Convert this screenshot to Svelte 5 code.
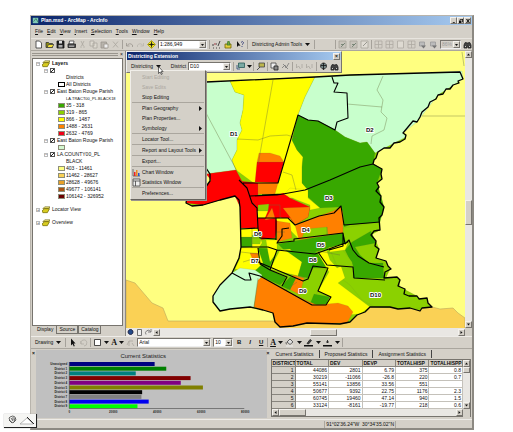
<script>
  const menus = ['File', 'Edit', 'View', 'Insert', 'Selection', 'Tools', 'Window', 'Help'];

  // Each icon is a list of [path, fill, stroke] on a 9 x 9 grid.
  const icons = {
    app: [['M1 1h7v7h-7z', '#7fc8b8', 'none'], ['M2 6L5 2L8 7', 'none', '#1d5c3c']],
    new: [['M2 1h3.5l2 2v5h-5.5z', '#fff', '#333']],
    open: [['M1 7.5v-5h2.5l1 1h3v4z', '#8a8a10', '#333'], ['M2 7.5l1.5-3h5.5l-2 3z', '#f3e03a', '#444']],
    save: [['M1 1h7v7h-7z', '#222', '#111'], ['M3 1h3v2.5h-3z', '#ddd', 'none'], ['M2.5 5h4v2.5h-4z', '#aaa', 'none']],
    print: [['M2.5 1h4.5l-.5 3h-4.5z', '#fff', '#444'], ['M1 4h7.5v3.5h-7.5z', '#555', '#222'], ['M2 6.2h5', 'none', '#ddd']],
    cut: [['M3 1l2.5 5M6 1l-2.5 5M3 6.2v1.6M6 6.2v1.6', 'none', '#aaa69e']],
    copy: [['M1 1h4v5h-4zM4 3h4v5h-4z', '#ddd9d0', '#aaa69e']],
    paste: [['M1 2h5.5v6h-5.5z', '#b8b4ac', '#99958d'], ['M4 4h4v4h-4z', '#eee', '#99958d']],
    del: [['M2 1.5l5 6M7 1.5l-5 6', 'none', '#aaa69e']],
    undo: [['M1.5 3v3h3M1.5 6q3-4 6-1v2', 'none', '#9a968e']],
    redo: [['M7.5 3v3h-3M7.5 6q-3-4-6-1v2', 'none', '#bab6ae']],
    plus: [['M4.5 .5l4 4l-4 4l-4-4z', '#f4ea28', '#b0a400'], ['M4.500 1.500v6M1.500 4.500h6', 'none', '#111'], ['M3.500 3.500h2v2h-2z', '#111', 'none']],
    editor: [['M1 8h1M4 8h1M7 8h1M1 6v-2M4 5v-2M6 6l2-5', 'none', '#222'], ['M2 3h2v2h-2z', '#b88', 'none']],
    toolbox: [['M1 4h6v4h-6z', '#e3cf3c', '#756500'], ['M4 1l-1 4h3l-1-4', '#7a3', '#373']],
    help: [['M1 1v6l1.500-1.500l2 .2z', '#111', 'none'], ['M5 2.500q1.500-2 2.500 0q0 1.200-1.500 2.200M6 6v1', 'none', '#222c70']],
    zin: [['M1 1h7v7h-7z', '#c7c3bb', '#a7a39b'], ['M3 7l4-4M3 4.500h3', 'none', '#6a7a6a']],
    zout: [['M1 1h7v7h-7z', '#e0dcd4', '#a7a39b'], ['M3 6l4-4', 'none', '#85857d']],
    grid: [['M1 1h7v7h-7zM1 4.500h7M4.500 1v7', 'none', '#aeaaa2']],
    frame: [['M1.500 1h6v7h-6z', '#dedad2', '#aeaaa2']],
    stack: [['M1.500 2h5v4h-5z', '#bbb', '#999'], ['M3 5.500h5l-2.500 3z', '#777', 'none']],
    find: [['M1 5q1-4 3-2h1q2-2 3 2v3h-3v-2h-1v2h-3z', '#444', '#222'], ['M2 6.500h1M6 6.500h1', 'none', '#eee']],
    assign: [['M2.500 1h6v4.500h-6z', '#7aa9a3', '#285a58'], ['M1 3v4h3', 'none', '#234a7a']],
    target: [['M3 1h5.500v4h-5.500z', '#bdb64c', '#444'], ['M1 8l3-3', 'none', '#333']],
    zoom: [['M1 1h5v5h-5z', '#eee', '#444'], ['M4 4h4v4h-4z', '#888', '#222']],
    net: [['M1 6l3-3l1 3l3-5M2 2l5 5', 'none', '#777']],
    swap: [['M1.500 2v4l2-2l2 3M7 2v4', 'none', '#aaa69e']],
    globe: [['M4.500 1a3 3 0 1 0 .1 0z', '#788', '#222'], ['M4.500 1v7M2 3.500h5', 'none', '#111']],
    pointer: [['M3 .5v7l1.600-1.500l1.200 2.500l1-.500l-1.200-2.400h2z', '#111', 'none']],
    rotate: [['M2 6a3 3 0 1 1 3 2M2 6v-3M2 6h3', 'none', '#b0aca4']],
    rect: [['M1.500 1.500h6v6h-6z', '#fff', '#222']],
    node: [['M1 7l2-4h4M3 3v5M6 5l2 3', 'none', '#aaa69e']],
    fill: [['M2 4l3-3l3 3l-3 2.500z', '#ddd', '#444'], ['M1 4q0 3 1 2', 'none', '#555'], ['M1 7.500h7v1h-7z', '#eee', 'none']],
    line: [['M3 5.500l3-4l1.500 1l-3 3.500z', '#444', '#222'], ['M0 7h9v1.500h-9z', '#111', 'none']],
    marker: [['M4.500 2v3M3 4h3', 'none', '#111'], ['M0 7h9v1.500h-9z', '#111', 'none']],
    layer: [['M1 3l2-2h6l-2 2z', '#fbf28a', '#6b6300'], ['M0 5.500l3-2.500h5.500l-2.500 4.500h-5z', '#d8cc20', '#6b6300']],
    chart: [['M1 1v7h7', 'none', '#555'], ['M2 4h1.500v4h-1.500z', '#e22', 'none'], ['M4 2h1.500v6h-1.500z', '#ec8a20', 'none'], ['M6 5h1.500v3h-1.500z', '#25c', 'none']],
    table: [['M1 1h7v7h-7zM1 3h7M3.500 3v5', '#eee', '#444']],
    world: [['M4.500 1.500a2.500 2.500 0 1 0 .1 0z', '#234a88', '#113']],
    page: [['M2.500 1.500h4v6h-4z', '#eee', '#555']],
    refresh: [['M2 6.500a2.500 2.500 0 1 1 4.500-3M7 1v3h-3', 'none', '#666']]
  };

  const toc = [
    { k: 'group', t: 'Layers', b: true },
    { k: 'check', t: '' },
    { k: 'head', t: 'Districts' },
    { k: 'sw', t: 'All Districts', c: '#fff', o: true },
    { k: 'check', t: 'East Baton Rouge Parish' },
    { k: 'head', t: 'LA.TRACT00_PL.BLACK18', long: true },
    { k: 'sw', t: '35 - 318', c: '#38a800' },
    { k: 'sw', t: '319 - 865', c: '#8bd100' },
    { k: 'sw', t: '866 - 1487', c: '#ffff00' },
    { k: 'sw', t: '1488 - 2631', c: '#ff8000' },
    { k: 'sw', t: '2632 - 4769', c: '#f00018' },
    { k: 'check', t: 'East Baton Rouge Parish' },
    { k: 'sw', t: '', c: '#d3f7d0' },
    { k: 'check', t: 'LA.COUNTY00_PL' },
    { k: 'head', t: 'BLACK' },
    { k: 'sw', t: '403 - 11461', c: '#ffff80' },
    { k: 'sw', t: '11462 - 28627', c: '#fad155' },
    { k: 'sw', t: '28628 - 49676', c: '#e8a028' },
    { k: 'sw', t: '49677 - 106141', c: '#ad5313' },
    { k: 'sw', t: '106142 - 326952', c: '#6b0000' },
    { k: 'group', t: 'Locator View', gap: true },
    { k: 'group', t: 'Overview', gap: true }
  ];

  const commands = [
    { t: 'Start Editing', off: true }, { t: 'Save Edits', off: true }, { t: 'Stop Editing' }, null,
    { t: 'Plan Geography', sub: true }, { t: 'Plan Properties...' }, { t: 'Symbology', sub: true }, null,
    { t: 'Locator Tool...' }, null,
    { t: 'Report and Layout Tools', sub: true }, null,
    { t: 'Export...' }, null,
    { t: 'Chart Window', i: 'chart' }, { t: 'Statistics Window', i: 'table' }, null,
    { t: 'Preferences...' }
  ];

  const outline = 'M206 82L315 77L350 75L460 72L463 79L458 81L459 83L453 85L450 89L446 89L443 94L438 95L436 99L430 102L428 107L422 112L420 117L417 122L413 121L403 133L406 135L405 139L400 142L394 143L390 148L384 148L378 152L376 158L374 160L373 164L382 169L381 174L382 179L377 183L379 187L376 191L381 196L380 202L384 207L382 215L379 218L380 230L374 231L371 235L376 241L375 246L379 249L376 258L386 261L388 266L391 269L385 272L384 278L397 277L400 280L398 286L405 289L404 294L409 296L417 296L419 299L427 298L428 303L432 307L422 308L420 311L410 308L398 309L390 307L378 307L370 307L365 312L357 315L350 322L340 324L307 323L293 326L280 327L275 322L273 313L263 310L250 307L230 309L220 311L213 302L213 296L220 285L232 273L239 258L241 247L240 207L239 200L235 196L220 200L203 205L192 206L186 203L187 197L205 188L210 181L210 174L206 168Z';

  const areas = [
    ['#c8ffcc', 'M200 82L230 81L235 92L244 95L243 110L240 123L242 130L237 140L237 150L232 160L236 170L206 174Z'],
    ['#ffff00', 'M230 81L315 77L305 97L298 115L292 140L297 150L303 157L302 167L302 183L308 190L308 198L280 198L255 184L236 170L232 160L237 150L237 140L242 130L240 123L243 110L244 95L235 92Z'],
    ['#c8ffcc', 'M315 77L462 71L463 79L438 95L417 122L403 133L406 137L375 153L367 142L360 143L345 137L335 130L318 121L308 120L298 115L305 97Z'],
    ['#38a800', 'M298 115L308 120L318 121L335 130L345 137L360 143L367 142L375 153L373 164L382 169L377 183L381 196L384 207L380 222L350 225L344 227L343 213L340 207L320 208L308 197L308 190L302 183L302 167L303 157L297 150L292 140Z'],
    ['#ff0000', 'M206 174L236 170L243 183L252 195L257 208L258 228L241 228L240 207L235 196L203 205L186 203L187 197L205 188L211 180Z'],
    ['#ff0000', 'M257 162L284 162L278 183L255 182Z'],
    ['#ff8000', 'M259 153L270 153L280 156L284 162L257 162Z'],
    ['#ff0000', 'M240 181L258 183L258 195L277 195L283 193L290 198L310 207L308 217L295 225L280 217L275 238L258 240L257 208Z'],
    ['#ff8000', 'M258 183L278 183L275 194L258 194Z'],
    ['#ffff00', 'M290 188L308 190L308 198L320 208L310 210L310 205L297 200L284 194Z'],
    ['#8bd100', 'M258 205L269 204L268 211L258 211Z'],
    ['#ffff00', 'M257 211L268 211L265 218L258 218Z'],
    ['#ff8000', 'M272 208L275 218L265 220Z'],
    ['#ff8000', 'M283 208L310 207L308 217L295 225L290 217Z'],
    ['#ffff00', 'M275 218L290 218L295 225L303 236L298 238L288 228L277 221Z'],
    ['#ff8000', 'M277 221L290 223L292 238L277 242Z'],
    ['#ff8000', 'M295 225L319 216L333 211L341 207L343 213L343 233L299 240Z'],
    ['#8bd100', 'M305 229L327 227L328 235L302 238Z'],
    ['#ffff00', 'M241 229L258 228L262 243L258 249L241 247Z'],
    ['#38a800', 'M241 237L252 237L252 247L241 247Z'],
    ['#8bd100', 'M252 235L262 234L260 244L252 244Z'],
    ['#8bd100', 'M343 228L380 222L380 230L371 235L376 241L379 249L376 258L390 269L385 280L398 277L400 287L417 296L432 307L410 309L375 307L362 300L350 285L330 270L343 250Z'],
    ['#38a800', 'M345 250L352 242L371 231L376 243L355 247L360 255L369 263L383 263L384 278L353 278L353 266Z'],
    ['#38a800', 'M278 244L294 241L343 233L346 243L315 252L285 251Z'],
    ['#ffff00', 'M241 248L258 248L262 256L265 266L255 270L247 272L235 269L240 258Z'],
    ['#ff8000', 'M250 253L258 253L258 258L252 258Z'],
    ['#38a800', 'M258 248L277 249L269 269L286 277L282 286L260 276L255 271L263 263Z'],
    ['#ffff00', 'M266 240L277 240L277 252L270 262L268 252Z'],
    ['#ffff00', 'M280 250L290 249L302 262L298 276L270 269Z'],
    ['#38a800', 'M285 250L315 252L330 260L325 268L313 268L308 278L298 276L302 262Z'],
    ['#8bd100', 'M270 270L298 276L308 279L313 268L328 270L318 291L310 305L287 295L280 285L287 278Z'],
    ['#ff8000', 'M293 275L304 278L300 295L289 289Z'],
    ['#38a800', 'M290 277L281 286L290 290L296 278ZM314 294L330 297L326 305L310 304Z'],
    ['#ffff00', 'M317 252L327 251L330 260L337 268L341 266L345 278L338 283L370 307L360 314L345 315L326 305L330 297L318 291L329 272Z'],
    ['#8bd100', 'M331 252L343 250L352 262L353 267L337 266Z'],
    ['#ffff00', 'M328 248L348 243L345 250L330 252Z'],
    ['#c8ffcc', 'M232 273L240 268L255 270L262 275L258 283L254 307L230 309L220 311L213 302L213 296L220 285Z'],
    ['#ff8000', 'M258 280L262 277L286 290L303 299L317 305L338 303L348 306L353 312L347 323L307 323L293 326L280 327L275 322L273 313L254 307Z']
  ];

  const districts =
    'M332 77L334 83L338 83L334 92L347 93L348 118L337 122L335 130L318 121L308 120L298 115L278 183L243 183M262 195L283 194L305 190L330 180L360 167L373 164' +
    'M239 180L247 188L252 203L257 208L258 228L241 229M250 196L277 195L283 194M258 218L288 218L295 225L319 216L334 213L341 206L344 225L380 222M276 218L276 240M258 228L260 238L276 239M289 228L282 229L282 236L277 243L294 241L294 239L343 233L345 244L349 240L353 250L358 256L369 263L384 267M241 247L268 247L277 250L270 270L287 277L282 286' +
    'M277 250L315 254L348 242M270 270L260 264L258 248M258 262L303 281L308 279L313 266L328 268L318 291L331 297L326 305L312 305L303 300L260 276L249 273L251 280L245 280L232 273M318 252L327 265L353 267L354 278L385 280M343 233L343 246L329 250';

  const tractLines =
    'M206 113L237 171M273 80L258 165M237 139L258 140L270 136L287 135L297 138M383 76L377 90L383 100L381 112L387 118L384 130L372 136L371 144M347 104L382 107M422 116H465M462 52L464 66M283 172L292 175L296 190M242 238H262M241 252L258 254M243 262L256 258M327 227V235M276 232H285M298 276L305 278M258 278L254 307M286 290L297 282M318 251L340 255M268 205H280V218M252 229V248';

  const labels = [
    ['D1', 230, 136], ['D2', 366, 132], ['D3', 325, 200], ['D4', 302, 232], ['D5', 317, 247], ['D6', 254, 236],
    ['D7', 251, 263], ['D8', 309, 262], ['D9', 299, 293], ['D10', 370, 297]
  ];

  const bars = [
    ['Unassigned', 38800, '#000080'], ['District 1', 44086, '#008000'], ['District 2', 30219, '#008080'],
    ['District 3', 55141, '#800000'], ['District 4', 50677, '#800080'], ['District 5', 60745, '#808000'],
    ['District 6', 33124, '#000000'], ['District 7', 32800, '#808080'], ['District 8', 36100, '#0000f0'],
    ['District 9', 31000, '#00ff00']
  ];

  const columns = ['DISTRICT', 'TOTAL', 'DEV', 'DEVP', 'TOTALHISP', 'TOTALHISPP'];
  const rows = [
    ['1', '44086', '2801', '6.79', '375', '0.8'],
    ['2', '30219', '-11066', '-26.8', '220', '0.7'],
    ['3', '55141', '13856', '33.56', '551', ''],
    ['4', '50677', '9392', '22.75', '1176', '2.3'],
    ['5', '60745', '19460', '47.14', '940', '1.5'],
    ['6', '33124', '-8161', '-19.77', '218', '0.6']
  ];
</script>

{#snippet icon(name)}
  <svg class="icon" viewBox="0 0 9 9" aria-hidden="true">
    {#each icons[name] as [d, fill, stroke]}
      <path {d} {fill} {stroke} stroke-width=".8" />
    {/each}
  </svg>
{/snippet}

{#snippet tools(names)}
  {#each names as name}
    <button class="tool" aria-label={name}>{@render icon(name)}</button>
  {/each}
{/snippet}

{#snippet arrow(d)}
  <svg class="arrow" viewBox="0 0 5 5" aria-hidden="true"><path {d} /></svg>
{/snippet}

{#snippet combo(name, value, cls)}
  <span class="combo {cls}">
    <select aria-label={name}><option>{value}</option></select>
    <span class="raised">{@render arrow('M1 2h3l-1.500 2z')}</span>
  </span>
{/snippet}

<main>
  <div class="window">
    <header class="title">
      {@render icon('app')}
      <span>Plan.mxd - ArcMap - ArcInfo</span>
      <div class="caption">
        <button class="raised" aria-label="Minimize">{@render arrow('M1 4h2.500v1h-2.500z')}</button>
        <button class="raised" aria-label="Restore">{@render arrow('M1 0h4v4h-1v-3h-3zM0 2h3v3h-3z')}</button>
        <button class="raised" aria-label="Close">{@render arrow('M0 0h1.500l1 1.500l1-1.500h1.500l-1.700 2.500l1.700 2.500h-1.500l-1-1.500l-1 1.500h-1.500l1.700-2.500z')}</button>
      </div>
    </header>

    <nav class="menubar">
      {#each menus as m}
        <button><u>{m[0]}</u>{m.slice(1)}</button>
      {/each}
    </nav>

    <div class="toolbar main-tools">
      {@render tools(['new', 'open', 'save', 'print', 'cut', 'copy', 'paste', 'del'])}
      <i class="sep"></i>
      {@render tools(['undo', 'redo', 'plus'])}
      {@render combo('Scale', '1:286,949', 'scale')}
      <i class="sep"></i>
      <div class="spread">{@render tools(['editor', 'toolbox', 'help'])}</div>
      <i class="sep"></i>
      <button class="text">Districting Admin Tools {@render arrow('M0 1h5l-2.500 3z')}</button>
      <i class="sep"></i>
      <div class="right-tools">
        <i class="sep"></i>
        {@render tools(['zin', 'zin', 'zout'])}
        <i class="sep"></i>
        {@render tools(['grid', 'grid', 'frame', 'grid', 'stack', 'stack'])}
        {@render combo('Zoom', '86%', 'zoom')}
        {@render tools(['find'])}
      </div>
    </div>

    <div class="body">
      <aside>
        <div class="grip"><i></i><button aria-label="Close contents">×</button></div>
        <div class="toc">
          {#each toc as r}
            <div class="row {r.k}" class:gap={r.gap} class:long={r.long}>
              {#if r.k === 'group'}
                <span class="exp">{r.b ? '−' : '+'}</span>{@render icon('layer')}
              {:else if r.k === 'check'}
                <span class="exp">−</span>
              {:else if r.k === 'sw'}
                <span class="swatch" class:heavy={r.o} style="background:{r.c}"></span>
              {/if}
              {#if r.k === 'check'}
                <label><input type="checkbox" checked aria-label={r.t || 'Districts'} />{r.t}</label>
              {:else}
                <span class:bold={r.b}>{r.t}</span>
              {/if}
            </div>
          {/each}
        </div>
        <div class="toctabs"><button class="on">Display</button><button>Source</button><button>Catalog</button></div>
      </aside>

      <section class="mapframe">
        <div class="mapmid">
          <svg class="map" viewBox="126 51 339 277" preserveAspectRatio="xMidYMid slice" role="img" aria-label="District map">
            <rect x="0" y="0" width="700" height="500" fill="#ffff80" />
            <path d="M126 280L135 283L152 303L163 308L168 321H275L307 323L347 323L357 315L370 307L410 308L432 307L440 309L453 308L458 313L465 318V340H126Z" fill="#fad155" stroke="#bba65a" stroke-width=".6" />
            <path d={outline} fill="#8bd100" />
            {#each areas as [fill, d]}
              <path {d} {fill} stroke="#6a7a30" stroke-opacity=".35" stroke-width=".4" />
            {/each}
            <path d={tractLines} fill="none" stroke="#66703c" stroke-opacity=".65" stroke-width=".6" />
            <path d={districts} fill="none" stroke="#000" stroke-width="1.1" stroke-linejoin="round" />
            <path d={outline} fill="none" stroke="#000" stroke-width="1.3" stroke-linejoin="round" />
            {#each labels as [t, x, y]}
              <text {x} {y} class="maplabel">{t}</text>
            {/each}
          </svg>
          <div class="vscroll">
            <span class="raised">{@render arrow('M1 3.500h3l-1.500-2z')}</span>
            <span class="raised thumb"></span>
            <span class="raised">{@render arrow('M1 1.500h3l-1.500 2z')}</span>
          </div>
        </div>
        <div class="hscroll">
          {@render tools(['world', 'page', 'refresh'])}
          <span class="raised">{@render arrow('M3.500 1v3l-2-1.500z')}</span>
          <span class="raised thumb"></span>
          <span class="raised">{@render arrow('M1.500 1v3l2-1.500z')}</span>
          <i class="corner"></i>
        </div>

        <div class="float">
          <div class="floattitle"><span>Districting Extension</span><button class="raised" aria-label="Close toolbar">×</button></div>
          <div class="toolbar">
            <button class="text">Districting {@render arrow('M0 1h5l-2.500 3z')}</button>
            <span class="lab">District</span>
            {@render combo('District', 'D10', 'district')}
            <i class="sep"></i>
            {@render tools(['assign'])}{@render arrow('M0 1h5l-2.500 3z')}
            <i class="sep"></i>
            {@render tools(['target'])}
            <i class="sep"></i>
            {@render tools(['zoom', 'net'])}
            <i class="sep"></i>
            {@render tools(['swap', 'swap'])}
            <i class="sep"></i>
            {@render tools(['globe', 'find'])}
          </div>
        </div>

        <div class="menu">
          {#each commands as c}
            {#if c}
              <button disabled={c.off}>
                <span class="slot">{#if c.i}{@render icon(c.i)}{/if}</span>
                <span class="name">{c.t}</span>
                {#if c.sub}{@render arrow('M1 0v5l3-2.500z')}{/if}
              </button>
            {:else}
              <hr />
            {/if}
          {/each}
        </div>
        <svg class="cursor" viewBox="0 0 6 9" aria-hidden="true"><path d="M.5 .5v7l1.600-1.500l1.200 2.500l1-.500l-1.200-2.400h2z" fill="#fff" stroke="#111" stroke-width=".6" /></svg>
      </section>
    </div>

    <div class="toolbar drawing">
      <button class="text">Drawing {@render arrow('M0 1h5l-2.500 3z')}</button>
      <i class="sep"></i>
      {@render tools(['pointer', 'rotate'])}
      <i class="sep"></i>
      {@render tools(['rect'])}{@render arrow('M0 1h5l-2.500 3z')}
      <button class="glyph">A</button>{@render arrow('M0 1h5l-2.500 3z')}
      {@render tools(['node'])}
      {@render combo('Font', 'Arial', 'font')}
      {@render combo('Size', '10', 'size')}
      <div class="spread"><button class="fmt">B</button><button class="fmt it">I</button><button class="fmt un">U</button></div>
      <i class="sep"></i>
      <button class="glyph un">A</button>{@render arrow('M0 1h5l-2.500 3z')}
      {#each ['fill', 'line', 'marker'] as n}
        <div class="spread">{@render tools([n])}{@render arrow('M0 1h5l-2.500 3z')}</div>
      {/each}
      <i class="sep"></i>
    </div>

    <div class="stats">
      <button class="x" aria-label="Close chart">×</button>
      <svg class="chart" viewBox="35 350 230 68" role="img" aria-label="Current Statistics">
        <text x="142" y="358" class="charttitle">Current Statistics</text>
        {#each bars as [name, value, color], i}
          <text x="66" y={365 + i * 4.7} class="tiny" text-anchor="end">{name}</text>
          <rect x="68" y={362 + i * 4.7} width={value * 0.0022} height="4" fill={color} />
        {/each}
        <path d="M68 362V408.500H243" fill="none" stroke="#444" stroke-width=".6" />
        {#each ['0', '20000', '40000', '60000', '80000'] as t, i}
          <text x={68 + i * 44} y="413" class="tiny" text-anchor="middle">{t}</text>
        {/each}
      </svg>
      <button class="x" aria-label="Close table">×</button>
      <div class="tablepane">
        <div class="tabs"><button>Current Statistics</button><button>Proposed Statistics</button><button>Assignment Statistics</button></div>
        <div class="gridbox">
          <div class="gridmid">
            <table>
              <thead><tr>{#each columns as c}<th>{c}</th>{/each}</tr></thead>
              <tbody>
                {#each rows as r}
                  <tr>{#each r as v, i}{#if i === 0}<th scope="row">{v}</th>{:else}<td>{v}</td>{/if}{/each}</tr>
                {/each}
              </tbody>
            </table>
            <div class="vscroll small">
              <span class="raised">{@render arrow('M1 3.500h3l-1.500-2z')}</span>
              <span class="raised thumb"></span>
              <span class="raised">{@render arrow('M1 1.500h3l-1.500 2z')}</span>
            </div>
          </div>
          <div class="hscroll small">
            <span class="raised">{@render arrow('M3.500 1v3l-2-1.500z')}</span>
            <span class="raised thumb"></span>
            <span class="raised">{@render arrow('M1.500 1v3l2-1.500z')}</span>
            <i class="corner"></i>
          </div>
        </div>
      </div>
    </div>

    <footer><span>91°02'36.24"W&nbsp; 30°34'35.02"N</span></footer>
  </div>

  <div class="mini">
    <svg viewBox="0 0 32 12" aria-hidden="true">
      <path d="M6 3q3-2 5 0l1 3l-3 3l-3-2l-1-3zM7 4l2 3M9 3v3M11 4l-1 4M5 6l3 3" fill="none" stroke="#444" stroke-width=".8" />
      <path d="M16 10L23 4L29 10Z" fill="#fff" stroke="#999" stroke-width=".7" />
      <path d="M23 3L30 10" stroke="#111" stroke-width=".9" />
    </svg>
  </div>
</main>

<style>
  :global(body) { background: #fff; }
  main {
    position: relative;
    padding: 15px 39px 5px 30px;
    font: 5px/7px "Liberation Sans", Arial, sans-serif;
    color: #111;
  }
  main * { box-sizing: border-box; }
  button {
    display: flex; align-items: center; padding: 0; margin: 0; border: 0;
    background: none; font: inherit; color: inherit; white-space: nowrap;
  }
  .window { background: #d4d0c8; border: 1px solid #b8b4ac; border-right: 2px solid #8c8982; border-bottom: 2px solid #8c8982; }
  .icon { width: 9px; height: 9px; flex: none; display: block; }
  .arrow { width: 5px; height: 5px; flex: none; display: block; fill: #111; }
  .raised {
    display: flex; align-items: center; justify-content: center; flex: none;
    width: 7px; height: 7px; background: #d4d0c8;
    border: 1px solid; border-color: #f4f2ee #77746e #77746e #f4f2ee;
  }
  .title {
    display: flex; align-items: center; gap: 2px; height: 9px; padding: 0 1px;
    background: linear-gradient(90deg, #0a246a, #a6caf0); color: #fff; font-weight: bold;
  }
  .title .icon { width: 7px; height: 7px; }
  .caption { display: flex; margin-left: auto; }
  .caption .arrow { width: 4px; height: 4px; }
  .menubar { display: flex; align-items: center; gap: 4px; height: 13px; padding: 0 4px; }
  .toolbar { display: flex; align-items: center; gap: 2px; }
  .main-tools { height: 13px; padding-left: 3px; border-top: 1px solid #e8e5df; border-bottom: 1px solid #aaa69e; }
  .sep { flex: none; width: 1px; height: 9px; background: #a5a19a; }
  .spread { display: flex; align-items: center; gap: 3px; }
  .text { gap: 3px; padding: 0 2px; }
  .right-tools { display: flex; align-items: center; gap: 2px; margin-left: auto; }
  .combo { display: flex; align-items: center; height: 9px; background: #fff; border: 1px solid; border-color: #77746e #eee #eee #77746e; }
  .combo select {
    appearance: none; flex: 1; min-width: 0; height: 7px; border: 0; margin: 0; padding: 0 1px;
    background: none; font: inherit; color: inherit;
  }
  .scale { width: 49px; }
  .zoom { width: 21px; background: #d4d0c8; color: #999; }
  .district { width: 43px; }
  .font { width: 74px; }
  .size { width: 20px; }

  .body { display: flex; height: 285px; }
  aside { display: flex; flex-direction: column; width: 95px; flex: none; border-right: 1px solid #8c8982; padding-right: 2px; }
  .grip { display: flex; align-items: center; gap: 2px; height: 7px; padding-left: 1px; }
  .grip i { flex: 1; height: 3px; border: solid #99958d; border-width: 1px 0; }
  .toc { flex: 1; margin-left: 1px; padding: 1px 0; background: #fff; border: 1px solid #77746e; overflow: hidden; }
  .row { display: flex; align-items: center; height: 7px; white-space: nowrap; gap: 2px; padding-left: 3px; }
  .row .icon { width: 8px; height: 8px; }
  .row.gap { margin-top: 6px; }
  .row.check { padding-left: 11px; }
  .row.head { padding-left: 33px; }
  .row.long { font-size: 4px; }
  .row.sw { padding-left: 25px; gap: 1px; }
  .row.check label { display: flex; align-items: center; gap: 2px; }
  .exp { width: 4px; height: 4px; border: 1px solid #bbb; font-size: 4px; line-height: 2px; text-align: center; }
  .bold { font-weight: bold; }
  .swatch { width: 7px; height: 5px; border: 1px solid #8d8d78; flex: none; }
  .swatch.heavy { border-color: #000; }
  input {
    appearance: none; width: 5px; height: 5px; margin: 0; border: 1px solid #555;
    background: linear-gradient(135deg, #fff 40%, #222 40%, #222 65%, #fff 65%);
  }
  .toctabs { display: flex; height: 10px; padding-left: 3px; }
  .toctabs button { height: 8px; padding: 0 2px; border: 1px solid #77746e; border-top: 0; }
  .toctabs .on { border-color: transparent; }

  .mapframe { position: relative; display: flex; flex-direction: column; flex: 1; min-width: 0; }
  .mapmid { display: flex; flex: 1; min-height: 0; }
  .map { flex: 1; min-width: 0; height: 100%; display: block; }
  .maplabel {
    font: bold 6px "Liberation Sans", Arial, sans-serif; fill: #111;
    stroke: #fff; stroke-width: 2px; paint-order: stroke; stroke-linejoin: round;
  }
  .vscroll { display: flex; flex-direction: column; justify-content: space-between; width: 7px; background: #e9e7e3; }
  .vscroll .thumb { height: 25px; margin: 142px 0 auto; }
  .hscroll { display: flex; align-items: center; height: 8px; background: #e9e7e3; }
  .hscroll .thumb { width: 27px; margin: 0 35% 0 auto; }
  .hscroll .corner { width: 7px; height: 8px; background: #d4d0c8; }

  .float {
    position: absolute; top: 0; left: 0; width: 216px; background: #d4d0c8;
    border: 1px solid; border-color: #eee #77746e #77746e #eee;
  }
  .floattitle {
    display: flex; align-items: center; justify-content: space-between; height: 8px; padding: 0 1px;
    background: linear-gradient(90deg, #0a246a, #a6caf0); color: #fff; font-weight: bold;
  }
  .floattitle button { color: #111; }
  .float .toolbar { height: 12px; padding: 0 2px; justify-content: space-between; gap: 1px; }
  .lab { padding-left: 6px; }
  .menu {
    position: absolute; top: 19px; left: 4px; width: 76px; padding: 1px; background: #d4d0c8;
    border: 1px solid; border-color: #f0eee9 #66635e #66635e #f0eee9; box-shadow: 1px 1px 0 #99958d;
  }
  .menu button { width: 100%; height: 10px; padding-right: 1px; }
  .menu button:disabled { color: #aaa69e; }
  .menu .slot { width: 10px; }
  .menu .name { flex: 1; text-align: left; }
  .menu hr { margin: 0; border: 0; height: 1px; background: #aaa69e; }
  .cursor { position: absolute; top: 15px; left: 32px; width: 6px; height: 9px; }

  .drawing { height: 13px; padding-left: 2px; border-top: 1px solid #eeece8; border-bottom: 1px solid #aaa69e; }
  .glyph { font: bold 8px/9px "Liberation Serif", serif; }
  .fmt { width: 8px; justify-content: center; font-weight: bold; font-size: 6px; }
  .it { font-style: italic; }
  .un { text-decoration: underline; }

  .stats { display: flex; height: 70px; padding: 1px; }
  .x { width: 4px; height: 7px; font-weight: bold; flex: none; }
  .chart { flex: 230; min-width: 0; height: 68px; background: #c0c0c0; }
  .charttitle { font: 6px "Liberation Sans", Arial, sans-serif; text-anchor: middle; fill: #222; }
  .tiny { font: bold 3px "Liberation Sans", Arial, sans-serif; fill: #222; }
  .tablepane { display: flex; flex-direction: column; flex: 200; min-width: 0; }
  .tabs { display: flex; height: 9px; }
  .tabs button { padding: 0 5px; border-right: 1px solid #444; height: 8px; }
  .gridbox { border: 1px solid #77746e; background: #fff; }
  .gridmid { display: flex; }
  table { flex: 1; width: 100%; table-layout: fixed; border-collapse: separate; border-spacing: 0; }
  th, td { height: 7px; padding: 0 1px; line-height: 6px; overflow: hidden; white-space: nowrap; border: solid #c4c1ba; border-width: 0 1px 1px 0; }
  td { text-align: right; }
  th { text-align: left; background: #d4d0c8; border-color: #88857e; }
  th:first-child { width: 24px; }
  tbody th { text-align: right; font-weight: normal; }
  .vscroll.small .thumb { height: 6px; margin: 0 0 auto; }
  .hscroll.small { height: 7px; }
  .hscroll.small .thumb { margin: 0 auto 0 0; }

  footer { display: flex; justify-content: flex-end; height: 9px; padding: 1px 76px 0 0; border-top: 1px solid #eeece8; }
  footer span { padding: 0 1px; line-height: 6px; border: solid #aaa69e; border-width: 0 1px; }
  .mini {
    position: absolute; left: 4px; top: 414px; width: 33px; height: 14px; background: #f5f5f3;
    border: solid #222; border-width: 0 1px 1px 0; box-shadow: 0 0 1px #999;
  }
  .mini svg { display: block; width: 32px; height: 12px; }
</style>
